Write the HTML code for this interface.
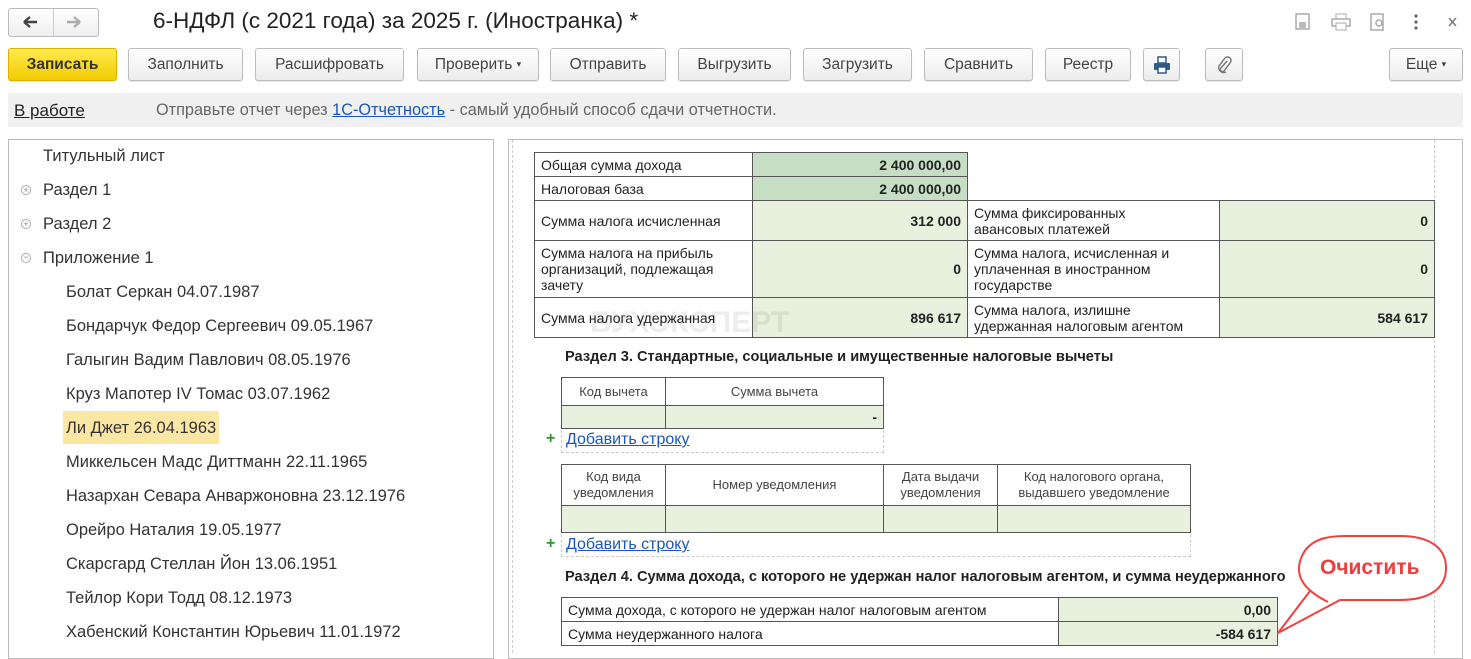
<!DOCTYPE html><html><head><meta charset="utf-8"><style>
*{box-sizing:border-box;margin:0;padding:0}
body{width:1471px;height:653px;overflow:hidden;background:#fff;font-family:"Liberation Sans",sans-serif;color:#333;position:relative}
.a{position:absolute}
.btn{position:absolute;top:48px;height:33px;border:1px solid #bdbdbd;border-radius:3px;background:linear-gradient(#fff,#ececec);font-size:15.5px;color:#444;display:flex;align-items:center;justify-content:center;box-shadow:0 1px 1px rgba(0,0,0,.1)}
.t{font-size:16.5px;color:#333;position:absolute;left:66px}
.c{position:absolute;border:1px solid #555;font-size:14px;color:#222;padding:0 6px;display:flex;align-items:center;line-height:16px}
.g{background:#e8f1de}.gd{background:#c6dfc4}
.r{justify-content:flex-end;font-weight:bold}
.h{justify-content:center;text-align:center;font-size:13px;color:#444}
.lnk{position:absolute;font-size:16px;color:#1a57b8;text-decoration:underline}
.pl{position:absolute;color:#2a9a2a;font-weight:bold;font-size:16px}
.st{position:absolute;font-size:14.6px;font-weight:bold;color:#222}
</style></head><body>
<div class="a" style="left:8px;top:8px;width:91px;height:29px;border:1px solid #bbb;border-radius:3px;background:linear-gradient(#fff,#eee)"></div>
<div class="a" style="left:53px;top:9px;width:1px;height:27px;background:#ccc"></div>
<svg class="a" style="left:22px;top:14px" width="70" height="16"><path d="M2 8h13M2 8l6-5M2 8l6 5" stroke="#444" stroke-width="2.4" fill="none"/><path d="M45 8h13M58 8l-6-5M58 8l-6 5" stroke="#aaa" stroke-width="2.4" fill="none"/></svg>
<div class="a" style="left:153px;top:8px;font-size:22.5px;color:#222">6-НДФЛ (с 2021 года) за 2025 г. (Иностранка) *</div>
<svg class="a" style="left:1294px;top:12px" width="170" height="20"><rect x="2" y="2" width="13" height="15" fill="none" stroke="#aaa" stroke-width="1.5"/><rect x="5" y="10" width="7" height="6" fill="#bbb"/><rect x="42" y="2" width="10" height="5" fill="none" stroke="#aaa"/><rect x="38" y="7" width="18" height="7" fill="none" stroke="#aaa" stroke-width="1.5"/><rect x="42" y="11" width="10" height="7" fill="#fff" stroke="#aaa"/><rect x="77" y="2" width="12" height="16" fill="none" stroke="#aaa" stroke-width="1.5"/><circle cx="85" cy="11" r="3" fill="none" stroke="#aaa" stroke-width="1.5"/><circle cx="122" cy="4" r="1.6" fill="#666"/><circle cx="122" cy="10" r="1.6" fill="#666"/><circle cx="122" cy="16" r="1.6" fill="#666"/><path d="M155 6l7 8M162 6l-7 8" stroke="#777" stroke-width="1.4"/></svg>
<div class="btn" style="left:8px;width:109px;background:linear-gradient(#ffe94d,#f2cc00);border-color:#d9b300;font-weight:bold;color:#333">Записать</div>
<div class="btn" style="left:128px;width:115px">Заполнить</div>
<div class="btn" style="left:255px;width:149px">Расшифровать</div>
<div class="btn" style="left:417px;width:122px">Проверить&nbsp; <span style="font-size:9px">▾</span></div>
<div class="btn" style="left:550px;width:116px">Отправить</div>
<div class="btn" style="left:678px;width:113px">Выгрузить</div>
<div class="btn" style="left:803px;width:109px">Загрузить</div>
<div class="btn" style="left:924px;width:109px">Сравнить</div>
<div class="btn" style="left:1045px;width:86px">Реестр</div>
<div class="btn" style="left:1143px;width:37px"><svg width="18" height="18"><rect x="5" y="1" width="8" height="6" fill="#fff" stroke="#2d5a88" stroke-width="1.5"/><rect x="1" y="7" width="16" height="7" rx="1" fill="#2d5a88"/><rect x="5" y="11" width="8" height="6" fill="#fff" stroke="#2d5a88" stroke-width="1.5"/></svg></div>
<div class="btn" style="left:1205px;width:38px"><svg width="16" height="18"><path d="M11 5l-6 7a2 2 0 0 0 3 3l6-8a3.5 3.5 0 0 0-5-5l-6 8a5 5 0 0 0 7 6" fill="none" stroke="#777" stroke-width="1.4"/></svg></div>
<div class="btn" style="left:1389px;width:74px">Еще&nbsp; <span style="font-size:9px">▾</span></div>
<div class="a" style="left:8px;top:93px;width:1455px;height:34px;background:#f0f0f0"></div>
<div class="a" style="left:14px;top:101px;font-size:17px;color:#222;text-decoration:underline">В работе</div>
<div class="a" style="left:156px;top:101px;font-size:16.3px;color:#666">Отправьте отчет через <span style="color:#1a57b8;text-decoration:underline">1С-Отчетность</span> - самый удобный способ сдачи отчетности.</div>
<div class="a" style="left:8px;top:139px;width:486px;height:520px;border:1px solid #bbb"></div>
<div class="a" style="left:508px;top:139px;width:955px;height:520px;border:1px solid #bbb"></div>
<div class="a" style="left:512px;top:140px;height:513px;border-left:1px dashed #ccc"></div>
<div class="a" style="left:1434px;top:140px;height:513px;border-left:1px dashed #ccc"></div>
<div class="t" style="left:43px;top:147px">Титульный лист</div>
<div class="a" style="left:21px;top:185px;width:10px;height:10px;border:1px solid #aaa;border-radius:50%;font-size:9px;line-height:8px;text-align:center;color:#888">+</div>
<div class="t" style="left:43px;top:181px">Раздел 1</div>
<div class="a" style="left:21px;top:219px;width:10px;height:10px;border:1px solid #aaa;border-radius:50%;font-size:9px;line-height:8px;text-align:center;color:#888">+</div>
<div class="t" style="left:43px;top:215px">Раздел 2</div>
<div class="a" style="left:21px;top:253px;width:10px;height:10px;border:1px solid #aaa;border-radius:50%;font-size:9px;line-height:7px;text-align:center;color:#888">−</div>
<div class="t" style="left:43px;top:249px">Приложение 1</div>
<div class="t" style="top:283px">Болат Серкан 04.07.1987</div>
<div class="t" style="top:317px">Бондарчук Федор Сергеевич 09.05.1967</div>
<div class="t" style="top:351px">Галыгин Вадим Павлович 08.05.1976</div>
<div class="t" style="top:385px">Круз Мапотер IV Томас 03.07.1962</div>
<div class="a" style="left:63px;top:411px;width:156px;height:33px;background:#fbe7a3"></div>
<div class="t" style="top:419px">Ли Джет 26.04.1963</div>
<div class="t" style="top:453px">Миккельсен Мадс Диттманн 22.11.1965</div>
<div class="t" style="top:487px">Назархан Севара Анваржоновна 23.12.1976</div>
<div class="t" style="top:521px">Орейро Наталия 19.05.1977</div>
<div class="t" style="top:555px">Скарсгард Стеллан Йон 13.06.1951</div>
<div class="t" style="top:589px">Тейлор Кори Тодд 08.12.1973</div>
<div class="t" style="top:623px">Хабенский Константин Юрьевич 11.01.1972</div>

<div class="c" style="left:534px;top:152px;width:219px;height:25px">Общая сумма дохода</div>
<div class="c gd r" style="left:752px;top:152px;width:216px;height:25px">2 400 000,00</div>
<div class="c" style="left:534px;top:176px;width:219px;height:25px">Налоговая база</div>
<div class="c gd r" style="left:752px;top:176px;width:216px;height:25px">2 400 000,00</div>
<div class="c" style="left:534px;top:200px;width:219px;height:41px">Сумма налога исчисленная</div>
<div class="c g r" style="left:752px;top:200px;width:216px;height:41px">312 000</div>
<div class="c" style="left:967px;top:200px;width:253px;height:41px">Сумма фиксированных<br>авансовых платежей</div>
<div class="c g r" style="left:1219px;top:200px;width:216px;height:41px">0</div>
<div class="c" style="left:534px;top:240px;width:219px;height:58px">Сумма налога на прибыль организаций, подлежащая зачету</div>
<div class="c g r" style="left:752px;top:240px;width:216px;height:58px">0</div>
<div class="c" style="left:967px;top:240px;width:253px;height:58px">Сумма налога, исчисленная и уплаченная в иностранном государстве</div>
<div class="c g r" style="left:1219px;top:240px;width:216px;height:58px">0</div>
<div class="c" style="left:534px;top:297px;width:219px;height:41px">Сумма налога удержанная</div>
<div class="c g r" style="left:752px;top:297px;width:216px;height:41px">896 617</div>
<div class="c" style="left:967px;top:297px;width:253px;height:41px">Сумма налога, излишне<br>удержанная налоговым агентом</div>
<div class="c g r" style="left:1219px;top:297px;width:216px;height:41px">584 617</div>
<div class="a" style="left:590px;top:306px;font-size:30px;font-weight:bold;color:rgba(0,0,0,.07)">БУХЭКСПЕРТ</div>

<div class="st" style="left:565px;top:349px">Раздел 3. Стандартные, социальные и имущественные налоговые вычеты</div>
<div class="a" style="left:561px;top:405px;width:323px;height:48px;border:1px dashed #ccc"></div>
<div class="c h" style="left:561px;top:377px;width:105px;height:29px">Код вычета</div>
<div class="c h" style="left:665px;top:377px;width:219px;height:29px">Сумма вычета</div>
<div class="c g" style="left:561px;top:405px;width:105px;height:24px"></div>
<div class="c g r" style="left:665px;top:405px;width:219px;height:24px">-</div>
<div class="pl" style="left:546px;top:430px">+</div>
<div class="lnk" style="left:566px;top:431px">Добавить строку</div>

<div class="a" style="left:561px;top:505px;width:630px;height:52px;border:1px dashed #ccc"></div>
<div class="c h" style="left:561px;top:464px;width:105px;height:42px">Код вида уведомления</div>
<div class="c h" style="left:665px;top:464px;width:219px;height:42px">Номер уведомления</div>
<div class="c h" style="left:883px;top:464px;width:115px;height:42px">Дата выдачи уведомления</div>
<div class="c h" style="left:997px;top:464px;width:194px;height:42px">Код налогового органа, выдавшего уведомление</div>
<div class="c g" style="left:561px;top:505px;width:105px;height:28px"></div>
<div class="c g" style="left:665px;top:505px;width:219px;height:28px"></div>
<div class="c g" style="left:883px;top:505px;width:115px;height:28px"></div>
<div class="c g" style="left:997px;top:505px;width:194px;height:28px"></div>
<div class="pl" style="left:546px;top:535px">+</div>
<div class="lnk" style="left:566px;top:536px">Добавить строку</div>

<div class="st" style="left:565px;top:569px">Раздел 4. Сумма дохода, с которого не удержан налог налоговым агентом, и сумма неудержанного</div>
<div class="c" style="left:561px;top:597px;width:498px;height:25px">Сумма дохода, с которого не удержан налог налоговым агентом</div>
<div class="c g r" style="left:1058px;top:597px;width:220px;height:25px">0,00</div>
<div class="c" style="left:561px;top:621px;width:498px;height:25px">Сумма неудержанного налога</div>
<div class="c g r" style="left:1058px;top:621px;width:220px;height:25px">-584 617</div>

<svg class="a" style="left:1270px;top:530px" width="190" height="110"><path d="M58 72 C38 62 22 48 32 26 C40 8 60 6 75 6 L130 6 C160 6 176 18 176 38 C176 58 160 70 130 70 L70 70 L8 103 L40 61" fill="#fff" stroke="#f04040" stroke-width="2" stroke-linejoin="round"/></svg>
<div class="a" style="left:1320px;top:556px;font-size:21px;font-weight:bold;color:#f03c3c">Очистить</div>
</body></html>
